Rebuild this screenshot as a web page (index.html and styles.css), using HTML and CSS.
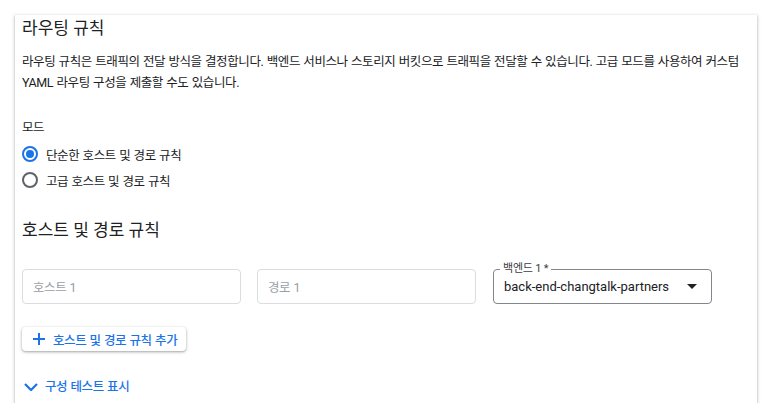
FILE: index.html
```html
<!DOCTYPE html>
<html lang="ko">
<head>
<meta charset="utf-8">
<title>라우팅 규칙</title>
<link rel="stylesheet" href="styles.css">
</head>
<body>
<div class="card">
  <h2 class="title">라우팅 규칙</h2>
  <p class="desc">라우팅 규칙은 트래픽의 전달 방식을 결정합니다. 백엔드 서비스나 스토리지 버킷으로 트래픽을 전달할 수 있습니다. 고급 모드를 사용하여 커스텀 YAML 라우팅 구성을 제출할 수도 있습니다.</p>
  <div class="mode-label">모드</div>
  <div class="radios">
    <label class="radio"><span class="dot checked"></span><span class="radio-text">단순한 호스트 및 경로 규칙</span></label>
    <label class="radio"><span class="dot"></span><span class="radio-text">고급 호스트 및 경로 규칙</span></label>
  </div>
  <h2 class="section">호스트 및 경로 규칙</h2>
  <div class="fields">
    <div class="field"><span class="ph">호스트 1</span></div>
    <div class="field"><span class="ph">경로 1</span></div>
    <div class="field select">
      <span class="float-label">백엔드 1 *</span>
      <span class="value">back-end-changtalk-partners</span>
      <svg class="caret" width="10" height="5" viewBox="0 0 10 5"><path d="M0 0h10L5 5z" fill="#202124"/></svg>
    </div>
  </div>
  <button class="add-btn" type="button">
    <svg class="plus" width="12" height="12" viewBox="0 0 12 12"><path d="M6 0v12M0 6h12" stroke="#1a73e8" stroke-width="2"/></svg>
    <span>호스트 및 경로 규칙 추가</span>
  </button>
  <div class="toggle">
    <svg class="chev" width="14" height="8" viewBox="0 0 14 8"><path d="M1 1l6 6 6-6" fill="none" stroke="#1a73e8" stroke-width="2.2"/></svg>
    <span>구성 테스트 표시</span>
  </div>
</div>
</body>
</html>
```

FILE: styles.css
```css
* { box-sizing: border-box; }
html, body { margin: 0; background: #fff; }
body {
  padding: 15px 15px 0;
  font-family: Roboto, "Noto Sans CJK KR", sans-serif;
  color: #202124;
}
.card {
  width: 742px;
  height: 388px;
  padding: 0 7px;
  background: #fff;
  box-shadow: 0 1px 2px rgba(60,64,67,.3), 0 1px 3px 1px rgba(60,64,67,.15);
}
.title, .section {
  margin: 0;
  font-size: 17px;
  font-weight: 400;
  line-height: 26px;
}
.desc {
  margin: 10px 0 0;
  font-size: 12.5px;
  line-height: 21px;
  letter-spacing: -0.4px;
  word-spacing: 0.6px;
  color: #202124;
}
.mode-label {
  margin-top: 25px;
  font-size: 12.5px;
  line-height: 20px;
  letter-spacing: -0.4px;
}
.radios { margin-top: 3px; }
.radio {
  display: flex;
  align-items: center;
  gap: 8px;
  height: 26px;
  font-size: 12.5px;
  letter-spacing: -0.4px;
  word-spacing: 0.6px;
}
.dot {
  width: 16px;
  height: 16px;
  border-radius: 50%;
  border: 2px solid #5f6368;
  display: flex;
  align-items: center;
  justify-content: center;
  flex: none;
}
.dot.checked { border-color: #1a73e8; }
.dot.checked::after {
  content: "";
  width: 8px;
  height: 8px;
  border-radius: 50%;
  background: #1a73e8;
}
.section { margin-top: 24px; }
.fields {
  margin-top: 26px;
  display: flex;
  gap: 16px;
}
.field {
  position: relative;
  width: 219px;
  height: 35px;
  border: 1px solid #dadce0;
  border-radius: 4px;
  display: flex;
  align-items: center;
  padding: 0 10px;
}
.ph {
  font-size: 12.5px;
  color: #9aa0a6;
  letter-spacing: -0.4px;
  word-spacing: 0.6px;
}
.select {
  border-color: #80868b;
  padding: 0 14px 0 10px;
  justify-content: space-between;
  margin-left: 1px;
}
.value {
  font-size: 13px;
  color: #202124;
}
.float-label {
  position: absolute;
  left: 6px;
  top: -8px;
  padding: 0 3px;
  background: #fff;
  font-size: 11px;
  line-height: 14px;
  color: #3c4043;
  letter-spacing: -0.2px;
}
.add-btn {
  margin-top: 23px;
  height: 24px;
  display: flex;
  align-items: center;
  gap: 8px;
  padding: 0 9px 0 11px;
  border: 0;
  border-radius: 4px;
  background: #fff;
  box-shadow: 0 1px 2px rgba(60,64,67,.3), 0 1px 3px 1px rgba(60,64,67,.15);
  font-family: inherit;
  font-size: 12.5px;
  font-weight: 500;
  color: #1a73e8;
  letter-spacing: -0.4px;
  word-spacing: 0.6px;
}
.toggle {
  margin-top: 26px;
  display: flex;
  align-items: center;
  gap: 7px;
  padding-left: 2px;
  line-height: 20px;
  font-size: 12.5px;
  font-weight: 500;
  color: #1a73e8;
  letter-spacing: -0.4px;
  word-spacing: 0.6px;
}
```
